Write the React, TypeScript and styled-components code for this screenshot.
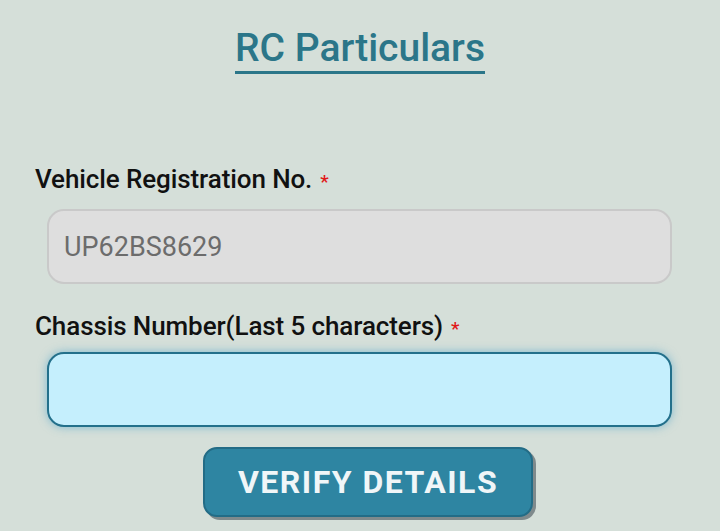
import React from 'react'
import styled, { createGlobalStyle } from 'styled-components'

const GlobalStyle = createGlobalStyle`
  html, body {
    margin: 0;
    padding: 0;
    background: #d5dfd9;
    font-family: Roboto, "Liberation Sans", sans-serif;
  }
`

const Page = styled.div`
  width: 720px;
  height: 531px;
  box-sizing: border-box;
  padding: 26px 35px 0 35px;
  display: flex;
  flex-direction: column;
  overflow: hidden;
`

const Title = styled.h1`
  align-self: center;
  margin: 0;
  font-size: 39px;
  font-weight: 500;
  color: #2b7689;
  line-height: 45px;
  border-bottom: 3px solid #2b7689;
`

const Label = styled.label<{ $top: number; $bottom: number }>`
  display: block;
  font-size: 26px;
  font-weight: 500;
  color: #111;
  line-height: 30px;
  letter-spacing: -0.1px;
  margin-top: ${(p) => p.$top}px;
  margin-bottom: ${(p) => p.$bottom}px;
`

const Star = styled.span`
  color: #e01818;
  font-size: 19px;
  margin-left: 8px;
`

const Input = styled.input<{ $active?: boolean }>`
  display: block;
  box-sizing: border-box;
  width: 625px;
  height: 75px;
  margin: 0 0 0 12px;
  padding: 0 15px;
  border-radius: 17px;
  font-family: Roboto, "Liberation Sans", sans-serif;
  font-size: 27px;
  outline: none;
  background: ${(p) => (p.$active ? '#c5effd' : '#dedede')};
  border: 2px solid ${(p) => (p.$active ? '#23708b' : '#c9c9c9')};
  color: #6c6c6c;
  box-shadow: ${(p) => (p.$active ? '0 0 10px rgba(70, 160, 200, 0.6)' : 'none')};
`

const Button = styled.button`
  align-self: center;
  margin-top: 20px;
  margin-left: 16px;
  width: 330px;
  height: 70px;
  border-radius: 14px;
  border: 2px solid #236c86;
  background: #2e85a2;
  color: #f0f6f8;
  font-family: Roboto, "Liberation Sans", sans-serif;
  font-size: 32px;
  font-weight: 700;
  letter-spacing: 1.5px;
  box-shadow: 3px 3px 0 #7f8a8c;
`

export default function App() {
  return (
    <>
      <GlobalStyle />
      <Page>
        <Title>RC Particulars</Title>
        <Label $top={90} $bottom={12}>
          Vehicle Registration No.<Star>*</Star>
        </Label>
        <Input value="UP62BS8629" readOnly />
        <Label $top={27} $bottom={8}>
          Chassis Number(Last 5 characters)<Star>*</Star>
        </Label>
        <Input $active />
        <Button>VERIFY DETAILS</Button>
      </Page>
    </>
  )
}
